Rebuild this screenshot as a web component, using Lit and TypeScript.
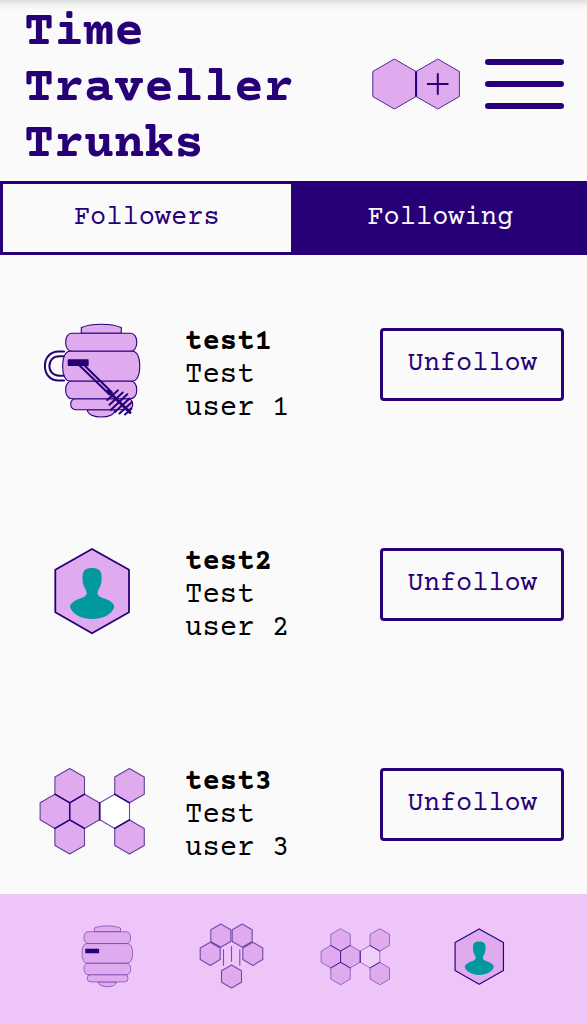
import { LitElement, html, svg, css } from "lit";
import { customElement, property, state } from "lit/decorators.js";

type IconName = "hive" | "mug" | "person" | "comb" | "swarm";

interface Member {
  name: string;
  bio: string;
  icon: IconName;
}

const members: Member[] = [
  { name: "test1", bio: "Test user 1", icon: "mug" },
  { name: "test2", bio: "Test user 2", icon: "person" },
  { name: "test3", bio: "Test user 3", icon: "comb" },
];

const hexPoints = (cx: number, cy: number, r: number): string => {
  const w = r * 0.866;
  return [
    [cx, cy - r],
    [cx + w, cy - r / 2],
    [cx + w, cy + r / 2],
    [cx, cy + r],
    [cx - w, cy + r / 2],
    [cx - w, cy - r / 2],
  ]
    .map(([x, y]) => `${x.toFixed(1)},${y.toFixed(1)}`)
    .join(" ");
};

const hex = (cx: number, cy: number, r: number, cls = "fill") =>
  svg`<polygon class=${cls} points=${hexPoints(cx, cy, r)}></polygon>`;

const hiveBody = svg`
  <path class="fill" d="M44.3 10.3V4.6C50 2.2 57 1.3 64.3 1.3S78.600 2.200 84.300 4.600V10.300Z"></path>
  <path class="fill" d="M50.300 86.700C50.500 91.500 57 94 64.300 94S77.800 91.500 78 86.700Z"></path>
  <rect class="fill" x="33.700" y="75.700" width="62" height="11" rx="5"></rect>
  <rect class="fill" x="28.700" y="10.300" width="71" height="18" rx="6" ry="8"></rect>
  <rect class="fill" x="28.700" y="58" width="71" height="17.700" rx="6" ry="8"></rect>
  <rect class="fill" x="25.700" y="28.300" width="77" height="29.700" rx="7" ry="13"></rect>
  <rect class="solid" x="30.700" y="36.300" width="21" height="6.700" rx="0.800"></rect>
`;

const handle = svg`
  <path class="line thick" d="M27 28.500H21.500C13 28.500 7.900 35 7.900 43S13 57.500 21.500 57.500H27"></path>
  <path class="line thick" d="M26.500 33.300H22.500C16 33.300 12.400 37.500 12.400 43S16 52.700 22.500 52.700H26.500"></path>
`;

const dipper = svg`
  <path class="line thick" d="M41.500 41.500L72.500 71.500M45.500 40.500L75 69.500"></path>
  <path class="line heavy" d="M71 68L93 89.500"></path>
  <path class="line thick" d="M70.300 77L81 67.300M72.500 81.700L85.700 69.500M74 86.700L90.300 71.200M78 89L92.500 75.500M82.500 90.500L94.500 79.500M88 91.500L94.500 85.500"></path>
`;

const combHexes = svg`
  ${hex(77.7, 48.3, 17.1, "hollow")}
  ${hex(32.7, 22.7, 17.1)}
  ${hex(17.9, 48.3, 17.1)}
  ${hex(47.6, 48.3, 17.1)}
  ${hex(32.7, 74, 17.1)}
  ${hex(92.5, 22.7, 17.1)}
  ${hex(92.5, 74, 17.1)}
  <path class="line seam" d="M17.900 31.200L32.700 39.800L47.500 31.200M32.700 39.800V56.900M17.900 65.400L32.700 56.900L47.500 65.400M62.700 39.800V56.900M77.700 31.200L92.500 39.800M77.700 65.400L92.500 56.900"></path>
`;

const person = svg`
  <polygon class="fill frame" points="55,6 92,26.700 92,69.300 55,90.300 18.300,69.300 18.300,26.700"></polygon>
  <path class="figure" d="M55 25C61 25 64.300 27.300 64.500 32.500C64.800 36 64.600 40 63.500 42.500C62.300 45.500 60.700 47.500 60.500 50.300C61 54 66 54.800 69.500 56.200C74 58 77 61 77.300 63.500C76 70.500 66.500 76 55.200 76S34.500 70.500 33 63.500C33.300 61 36.500 58 41 56.200C44.500 54.800 49.500 54 49.800 50.300C49.500 47.500 47.800 45.500 46.700 42.500C45.600 40 45.400 36 45.600 32.500C45.900 27.300 49 25 55 25Z"></path>
`;

const swarm = svg`
  ${hex(25.8, 10.6, 11.6)}
  ${hex(47.2, 10.6, 11.6)}
  ${hex(15.2, 28.8, 11.6)}
  ${hex(57.8, 28.8, 11.6)}
  ${hex(36.5, 51.5, 11.6)}
  <path class="line faint" d="M28.500 24.800V40.200M36.500 21.500V36.200M44.800 24.800V40.200"></path>
`;

@customElement("hive-icon")
export class HiveIcon extends LitElement {
  @property() name: IconName = "hive";

  static styles = css`
    :host {
      display: block;
    }
    svg {
      display: block;
      width: 100%;
      height: 100%;
      overflow: visible;
    }
    .fill,
    .hollow,
    .line {
      stroke: #270078;
      stroke-width: 1.1;
      stroke-linejoin: round;
    }
    .fill,
    .hollow,
    .faint {
      stroke-opacity: var(--icon-edge, 0.7);
    }
    .mug .fill {
      stroke-opacity: 1;
    }
    .fill {
      fill: #dfaaee;
    }
    .hollow {
      fill: var(--icon-hollow, #ffffff);
    }
    .line {
      fill: none;
      stroke-linecap: round;
    }
    .seam {
      stroke-width: 1.5;
      stroke-opacity: var(--icon-edge, 0.9);
    }
    .thick {
      stroke-width: 2;
    }
    .heavy {
      stroke-width: 3;
    }
    .frame {
      stroke-width: 1.8;
      stroke-opacity: 1;
    }
    .solid {
      fill: #270078;
    }
    .figure {
      fill: #02999e;
    }
  `;

  render() {
    switch (this.name) {
      case "mug":
        return html`<svg class="mug" viewBox="0 0 111 96" aria-hidden="true">${handle}${hiveBody}${dipper}</svg>`;
      case "person":
        return html`<svg viewBox="0 0 111 96" aria-hidden="true">${person}</svg>`;
      case "comb":
        return html`<svg viewBox="0 0 111 96" aria-hidden="true">${combHexes}</svg>`;
      case "swarm":
        return html`<svg viewBox="0 0 73 63" aria-hidden="true">${swarm}</svg>`;
      default:
        return html`<svg viewBox="9 0 111 96" aria-hidden="true">${hiveBody}</svg>`;
    }
  }
}

@customElement("app-root")
export class AppRoot extends LitElement {
  @state() private tab: "followers" | "following" = "following";

  static styles = css`
    :host {
      display: flex;
      flex-direction: column;
      height: 100vh;
      overflow: hidden;
      background: #fafafa;
      color: #000000;
      font-family: "Courier Prime", "Liberation Mono", monospace;
      font-size: 27px;
    }
    * {
      box-sizing: border-box;
    }
    button {
      margin: 0;
      font: inherit;
      color: #270078;
      cursor: pointer;
    }
    .header {
      display: flex;
      align-items: center;
      justify-content: space-between;
      padding: 5px 23px 8px 24px;
      background: linear-gradient(#dcdcdc, #f4f4f4 5px, #fafafa 12px);
    }
    .title {
      margin: 0;
      max-width: 300px;
      font-size: 50px;
      line-height: 56px;
      font-weight: 700;
      color: #270078;
    }
    .actions {
      display: flex;
      align-items: center;
      gap: 24px;
      padding-bottom: 10px;
    }
    .action {
      display: block;
      padding: 0;
      border: 0;
      background: none;
    }
    .action svg {
      display: block;
    }
    .cell {
      fill: #dfaaee;
      stroke: #270078;
      stroke-opacity: 0.8;
      stroke-width: 1;
    }
    .mark {
      stroke: #270078;
      stroke-width: 2;
    }
    .bars {
      stroke: #270078;
      stroke-width: 6;
      stroke-linecap: round;
    }
    .tabs {
      display: grid;
      grid-template-columns: 1fr 1fr;
    }
    .tab {
      height: 74px;
      padding: 0;
      border: 3px solid #270078;
      background: #fafafa;
    }
    .tab.active {
      background: #270078;
      color: #fafafa;
    }
    .list {
      flex: 1;
      min-height: 0;
      overflow: hidden;
      margin: 0;
      padding: 0;
      list-style: none;
    }
    .row {
      display: grid;
      grid-template-columns: 185px 1fr auto;
      align-items: start;
      padding: 68px 23px 50px 0;
    }
    .avatar {
      width: 111px;
      height: 96px;
      justify-self: center;
    }
    .about {
      padding: 3px 60px 0 0;
      line-height: 33px;
    }
    .name,
    .bio {
      margin: 0;
      font-size: 29px;
    }
    .name {
      font-weight: 700;
    }
    .unfollow {
      height: 73px;
      margin-top: 5px;
      padding: 0 24px 2px;
      border: 3px solid #270078;
      border-radius: 4px;
      background: #fafafa;
    }
    .nav {
      display: grid;
      grid-template-columns: repeat(4, 1fr);
      height: 130px;
      padding: 0 46px 6px;
      background: #edc5f9;
      --icon-edge: 0.6;
      --icon-hollow: #f0cdfa;
    }
    .link {
      display: flex;
      align-items: center;
      justify-content: center;
    }
    .glyph {
      width: 73px;
      height: 63px;
    }
  `;

  private renderTab(id: "followers" | "following", label: string) {
    return html`<button
      class="tab ${this.tab === id ? "active" : ""}"
      role="tab"
      aria-selected=${this.tab === id}
      @click=${() => (this.tab = id)}
    >${label}</button>`;
  }

  private renderLink(name: IconName, label: string) {
    return html`<a class="link" href="#${name}" aria-label=${label}>
      <hive-icon class="glyph" name=${name}></hive-icon>
    </a>`;
  }

  render() {
    return html`
      <header class="header">
        <h1 class="title">Time Traveller Trunks</h1>
        <div class="actions">
          <button class="action" aria-label="Add">
            <svg width="90" height="52" viewBox="0 0 90 52">
              <polygon class="cell" points=${hexPoints(23.4, 26, 25)}></polygon>
              <polygon class="cell" points=${hexPoints(66.8, 26, 25)}></polygon>
              <path class="mark" d="M45.100 13.500V38.500M56 26H77.500M66.800 15.200V36.800"></path>
            </svg>
          </button>
          <button class="action" aria-label="Menu">
            <svg width="79" height="50" viewBox="0 0 79 50">
              <path class="bars" d="M3 3H76M3 25H76M3 47H76"></path>
            </svg>
          </button>
        </div>
      </header>
      <div class="tabs" role="tablist">
        ${this.renderTab("followers", "Followers")}
        ${this.renderTab("following", "Following")}
      </div>
      <ul class="list">
        ${members.map(
          (m) => html`<li class="row">
            <hive-icon class="avatar" name=${m.icon}></hive-icon>
            <div class="about">
              <h2 class="name">${m.name}</h2>
              <p class="bio">${m.bio}</p>
            </div>
            <button class="unfollow">Unfollow</button>
          </li>`
        )}
      </ul>
      <nav class="nav">
        ${this.renderLink("hive", "Hive")}
        ${this.renderLink("swarm", "Swarm")}
        ${this.renderLink("comb", "Comb")}
        ${this.renderLink("person", "Profile")}
      </nav>
    `;
  }
}
